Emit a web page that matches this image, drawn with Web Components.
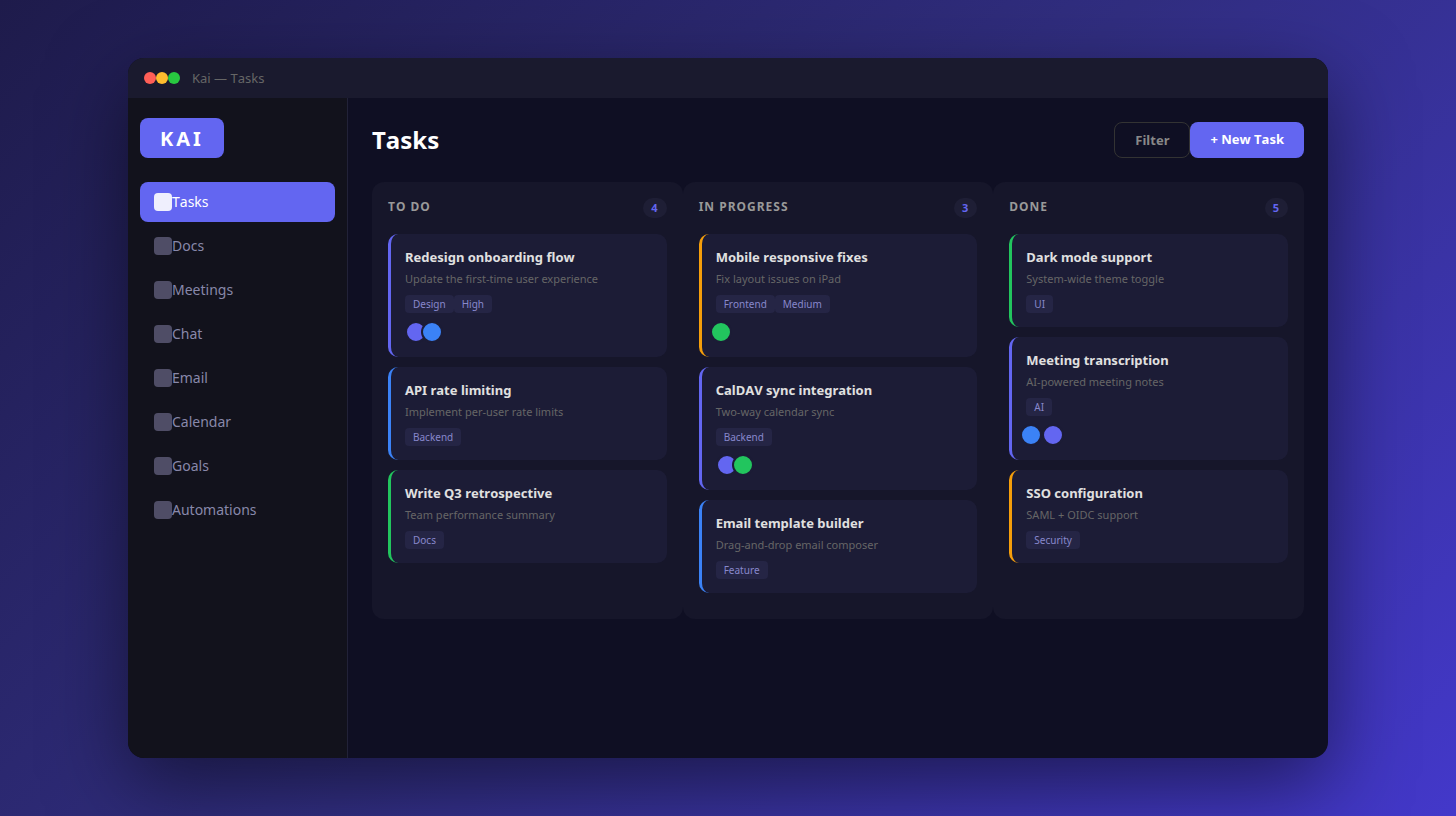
<!DOCTYPE html>
<html lang="en">
<head>
<meta charset="utf-8">
<title>Kai — Tasks</title>
<style>
  html, body { margin: 0; min-height: 100vh; }
  body {
    font-family: "Noto Sans", "Open Sans", sans-serif;
    font-kerning: none;
    background: linear-gradient(135deg, #1e1b4b 0%, #312e81 50%, #4338ca 100%);
    display: flex; align-items: center; justify-content: center;
  }
</style>
</head>
<body>
<kai-window label="Kai — Tasks">
  <kai-sidebar slot="sidebar">
    <kai-nav-item active>Tasks</kai-nav-item>
    <kai-nav-item>Docs</kai-nav-item>
    <kai-nav-item>Meetings</kai-nav-item>
    <kai-nav-item>Chat</kai-nav-item>
    <kai-nav-item>Email</kai-nav-item>
    <kai-nav-item>Calendar</kai-nav-item>
    <kai-nav-item>Goals</kai-nav-item>
    <kai-nav-item>Automations</kai-nav-item>
  </kai-sidebar>
  <kai-page-header label="Tasks">
    <kai-button variant="outline">Filter</kai-button>
    <kai-button>+ New Task</kai-button>
  </kai-page-header>
  <kai-board>
    <kai-column label="TO DO" count="4">
      <kai-card accent="indigo" label="Redesign onboarding flow" note="Update the first-time user experience" tags="Design,High" people="indigo,blue"></kai-card>
      <kai-card accent="blue" label="API rate limiting" note="Implement per-user rate limits" tags="Backend"></kai-card>
      <kai-card accent="green" label="Write Q3 retrospective" note="Team performance summary" tags="Docs"></kai-card>
    </kai-column>
    <kai-column label="IN PROGRESS" count="3">
      <kai-card accent="amber" label="Mobile responsive fixes" note="Fix layout issues on iPad" tags="Frontend,Medium" people="green"></kai-card>
      <kai-card accent="indigo" label="CalDAV sync integration" note="Two-way calendar sync" tags="Backend" people="indigo,green"></kai-card>
      <kai-card accent="blue" label="Email template builder" note="Drag-and-drop email composer" tags="Feature"></kai-card>
    </kai-column>
    <kai-column label="DONE" count="5">
      <kai-card accent="green" label="Dark mode support" note="System-wide theme toggle" tags="UI"></kai-card>
      <kai-card accent="indigo" label="Meeting transcription" note="AI-powered meeting notes" tags="AI" people="blue,indigo"></kai-card>
      <kai-card accent="amber" label="SSO configuration" note="SAML + OIDC support" tags="Security"></kai-card>
    </kai-column>
  </kai-board>
</kai-window>

<script>
  const define = (name, render) => customElements.define(name, class extends HTMLElement {
    constructor() { super(); this.attachShadow({ mode: "open" }); }
    connectedCallback() { this.shadowRoot.innerHTML = render(this); }
  });
  const attr = (el, name) => el.getAttribute(name) || "";
  const list = (el, name) => attr(el, name).split(",").filter(Boolean);

  define("kai-window", el => `
    <style>
      :host { display: flex; flex-direction: column; box-sizing: border-box; width: 100%; max-width: 1200px;
        min-height: 700px; border-radius: 16px; overflow: hidden; background: #0f0f23;
        box-shadow: 0 25px 80px rgba(0, 0, 0, .5); }
      header { display: flex; align-items: center; height: 40px; padding: 0 16px; background: #1a1a2e; }
      i { width: 12px; height: 12px; border-radius: 50%; }
      .close { background: #ff5f57; } .min { background: #febc2e; } .max { background: #28c840; }
      span { margin-left: 12px; font-size: 13px; line-height: 18px; color: #666; }
      .body { flex: 1; display: flex; }
      main { flex: 1; min-width: 0; padding: 24px; }
    </style>
    <header><i class="close"></i><i class="min"></i><i class="max"></i><span>${attr(el, "label")}</span></header>
    <div class="body"><slot name="sidebar"></slot><main><slot></slot></main></div>`);

  define("kai-sidebar", () => `
    <style>
      :host { display: block; box-sizing: border-box; width: 220px; padding: 20px 12px;
        background: #12121c; border-right: 1px solid #222238; }
      .logo { display: inline-block; vertical-align: top; padding: 7px 20px 5px; margin-bottom: 24px; border-radius: 8px;
        background: #6366f1; color: #fff; font-size: 20px; font-weight: 700; line-height: 28px; letter-spacing: 3px; }
      nav { display: flex; flex-direction: column; gap: 4px; }
    </style>
    <div class="logo">KAI</div>
    <nav><slot></slot></nav>`);

  define("kai-nav-item", () => `
    <style>
      :host { display: block; --ink: #8888aa; }
      :host([active]) { --ink: #fff; }
      a { display: flex; align-items: center; height: 40px; padding: 0 14px; border-radius: 8px;
        color: var(--ink); font-size: 14px; line-height: 20px; text-decoration: none; }
      :host([active]) a { background: #6366f1; }
      i { width: 18px; height: 18px; border-radius: 4px; background: #4f4d66; }
      :host([active]) i { background: #efeffd; }
    </style>
    <a href="#"><i></i><slot></slot></a>`);

  define("kai-page-header", el => `
    <style>
      :host { display: flex; justify-content: space-between; align-items: center; margin-bottom: 24px; }
      h1 { margin: 0; font-size: 24px; line-height: 32px; font-weight: 700; color: #fff; }
      div { display: flex; }
    </style>
    <h1>${attr(el, "label")}</h1><div><slot></slot></div>`);

  define("kai-button", () => `
    <style>
      :host { display: block; }
      button { display: block; height: 36px; padding: 0 20px 2px; border: 0; border-radius: 8px; background: #6366f1;
        color: #fff; font: 700 13px/18px "Noto Sans", "Open Sans", sans-serif; font-kerning: none; }
      :host([variant="outline"]) button { padding-bottom: 0; border: 1px solid #333; background: transparent; color: #888; }
    </style>
    <button type="button"><slot></slot></button>`);

  define("kai-board", () => `
    <style>:host { display: grid; grid-template-columns: repeat(3, minmax(0, 1fr)); }</style>
    <slot></slot>`);

  define("kai-column", el => `
    <style>
      :host { display: block; padding: 16px 16px 26px; border-radius: 12px; background: #16162a; }
      header { display: flex; align-items: flex-start; justify-content: space-between; margin-bottom: 16px; letter-spacing: 1px; }
      h2 { margin: 0; font-size: 12px; line-height: 18px; font-weight: 700; color: #999; }
      span { padding: 2px 8px; border-radius: 10px; background: #1e1e35; color: #6366f1;
        font-size: 11px; line-height: 16px; font-weight: 700; }
      section { display: flex; flex-direction: column; gap: 10px; }
    </style>
    <header><h2>${attr(el, "label")}</h2><span>${attr(el, "count")}</span></header>
    <section><slot></slot></section>`);

  define("kai-card", el => `
    <style>
      :host { --indigo: #6366f1; --blue: #3b82f6; --green: #22c55e; --amber: #f59e0b; --surface: #1c1c36;
        display: block; padding: 14px; border-radius: 10px; background: var(--surface); border-left: 3px solid var(--${attr(el, "accent")}); }
      h3 { margin: 0 0 5px; font-size: 13px; line-height: 18px; font-weight: 700; color: #e0e0e0; }
      p { margin: 0 0 9px; font-size: 11px; line-height: 15px; color: #666; font-kerning: normal; }
      div { display: flex; }
      span { padding: 2px 8px; border-radius: 4px; background: #252545; color: #8888cc; font-size: 10px; line-height: 14px; }
      .people { margin-top: 8px; }
      i { width: 18px; height: 18px; border: 2px solid var(--surface); border-radius: 50%; }
      .indigo { background: var(--indigo); }
      .blue { background: var(--blue); margin-left: -6px; }
      .green { background: var(--green); margin-left: -6px; }
    </style>
    <h3>${attr(el, "label")}</h3>
    <p>${attr(el, "note")}</p>
    <div>${list(el, "tags").map(t => `<span>${t}</span>`).join("")}</div>
    ${el.hasAttribute("people") ? `<div class="people">${list(el, "people").map(c => `<i class="${c}"></i>`).join("")}</div>` : ""}`);
</script>
</body>
</html>
